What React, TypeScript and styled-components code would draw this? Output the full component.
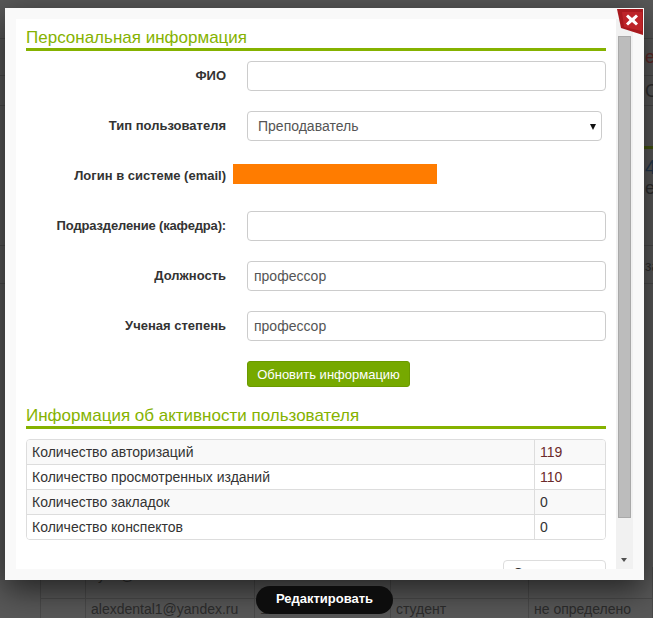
import React from 'react';
import styled, { createGlobalStyle } from 'styled-components';

const GlobalStyle = createGlobalStyle`
    html, body {
        margin: 0;
        padding: 0;
        background: #565656;
    }
    body {
        font-family: "Liberation Sans", Arial, sans-serif;
        font-size: 14px;
        color: #333;
    }
`;

const Page = styled.div`
    position: relative;
    width: 653px;
    height: 618px;
    overflow: hidden;
    background: #585858;
`;

const BackRow = styled.div<{ $h: number; $plain?: boolean }>`
    box-sizing: border-box;
    height: ${(p) => p.$h}px;
    border-bottom: ${(p) => (p.$plain ? '0' : '1px solid #4a4a4a')};
    padding-left: 645px;
    line-height: ${(p) => p.$h}px;
    font-size: 18px;
    color: #2f2f2f;
    white-space: nowrap;
`;

const BackRed = styled.span`
    color: #5e2a28;
`;

const BackGreen = styled.div`
    height: 3px;
    margin-left: 644px;
    background: #44550f;
`;

const BackBlue = styled.span`
    color: #24384e;
    font-size: 20px;
`;

const BackSmall = styled.span`
    font-size: 14px;
`;

const BackTable = styled.div`
    position: absolute;
    left: 40px;
    right: 0;
    top: 567px;
    display: grid;
    grid-template-columns: 45px 169px 136px 138px 1fr;
    grid-auto-rows: 32px;
    border-left: 1px solid #4a4a4a;
`;

const BackCell = styled.div<{ $lift?: boolean }>`
    box-sizing: border-box;
    border-right: 1px solid #4a4a4a;
    border-bottom: 1px solid #4a4a4a;
    padding: 0 6px 0 5px;
    font-size: 14px;
    line-height: ${(p) => (p.$lift ? 16 : 20)}px;
    color: #2c2c2c;
    white-space: nowrap;
`;

const Modal = styled.div`
    position: absolute;
    left: 5px;
    top: 8px;
    width: 639px;
    height: 572px;
    box-sizing: border-box;
    padding: 11px;
    background: #f9f9f9;
    box-shadow: 0 10px 30px rgba(0, 0, 0, 0.6);
    display: flex;
`;

const Content = styled.div`
    flex: none;
    width: 600px;
    height: 550px;
    overflow: hidden;
    box-sizing: border-box;
    padding: 0 10px;
    background: #fff;
`;

const ScrollTrack = styled.div`
    position: relative;
    flex: none;
    width: 17px;
    height: 550px;
    box-sizing: border-box;
    padding: 17px 2px 0;
    background: #f1f1f1;
`;

const ScrollThumb = styled.div`
    height: 482px;
    box-sizing: border-box;
    background: #bcbcbc;
    border: 1px solid #a9a9a9;
`;

const ScrollArrow = styled.div`
    position: absolute;
    left: 5px;
    bottom: 7px;
    width: 0;
    height: 0;
    border-left: 3.5px solid transparent;
    border-right: 3.5px solid transparent;
    border-top: 4px solid #505050;
`;

const SectionTitle = styled.h3<{ $top: number }>`
    margin: ${(p) => p.$top}px 0 0;
    font-size: 17px;
    line-height: 19px;
    font-weight: 400;
    color: #85b200;
    border-bottom: 3px solid #85b200;
    padding-bottom: 1px;
`;

const FormRow = styled.div<{ $top: number }>`
    display: flex;
    align-items: center;
    margin-top: ${(p) => p.$top}px;
    height: 30px;
`;

const FieldLabel = styled.label<{ $tight?: boolean }>`
    flex: none;
    width: 200px;
    padding-bottom: 2px;
    text-align: right;
    font-size: 13px;
    font-weight: 700;
    letter-spacing: ${(p) => (p.$tight ? '-0.16px' : '0')};
    color: #333;
    white-space: nowrap;
`;

const TextField = styled.div`
    flex: none;
    margin-left: 21px;
    width: 359px;
    height: 30px;
    box-sizing: border-box;
    border: 1px solid #ccc;
    border-radius: 4px;
    background: #fff;
    padding: 0 6px;
    line-height: 28px;
    font-size: 14px;
    color: #555;
`;

const SelectField = styled(TextField)`
    position: relative;
    width: 355px;
    padding-left: 10px;
`;

const SelectCaret = styled.span`
    position: absolute;
    right: 5px;
    top: 12px;
    width: 0;
    height: 0;
    border-left: 3.5px solid transparent;
    border-right: 3.5px solid transparent;
    border-top: 6px solid #111;
`;

const Redacted = styled.div`
    flex: none;
    margin-left: 7px;
    margin-top: -5px;
    width: 204px;
    height: 20px;
    background: #ff7c00;
`;

const SubmitRow = styled.div`
    margin: 20px 0 0 221px;
`;

const SubmitButton = styled.button`
    display: block;
    width: 163px;
    height: 26px;
    padding: 0;
    border: 1px solid #6b9a00;
    border-radius: 3px;
    background: #76a900;
    color: #fff;
    font-family: inherit;
    font-size: 13px;
    text-align: center;
`;

const StatsTable = styled.div`
    margin-top: 10px;
    border: 1px solid #ddd;
    border-radius: 4px;
    overflow: hidden;
`;

const StatsRow = styled.div<{ $odd: boolean }>`
    display: grid;
    grid-template-columns: 507px 1fr;
    height: 25px;
    box-sizing: border-box;
    line-height: 24px;
    background: ${(p) => (p.$odd ? '#f9f9f9' : '#fff')};
    border-top: 1px solid #ddd;
    &:first-child {
        border-top: 0;
        height: 24px;
    }
`;

const StatsName = styled.div`
    padding-left: 5px;
    color: #333;
`;

const StatsValue = styled.div<{ $hot: boolean }>`
    padding-left: 5px;
    border-left: 1px solid #ddd;
    color: ${(p) => (p.$hot ? '#6b2a2a' : '#333')};
`;

const CutOff = styled.div`
    margin: 20px 0 0 477px;
    height: 30px;
    box-sizing: border-box;
    border: 1px solid #ddd;
    border-radius: 4px;
    padding: 4px 0 0 9px;
    color: #333;
`;

const CloseTag = styled.button`
    position: absolute;
    left: 612px;
    top: 1px;
    width: 26px;
    height: 26px;
    padding: 0;
    border: 0;
    background: none;
    line-height: 0;
`;

const EditButton = styled.button`
    position: absolute;
    left: 256px;
    top: 586px;
    width: 137px;
    height: 28px;
    padding: 0 0 4px;
    border: 0;
    border-radius: 14px;
    background: #0d0d0d;
    color: #fff;
    font-family: inherit;
    font-size: 13px;
    font-weight: 700;
`;

const stats = [
    { name: 'Количество авторизаций', value: 119 },
    { name: 'Количество просмотренных изданий', value: 110 },
    { name: 'Количество закладок', value: 0 },
    { name: 'Количество конспектов', value: 0 },
];

const CloseIcon: React.FC = () => (
    <svg width="26" height="26" viewBox="0 0 26 26">
        <path d="M0 0H26V26L4 19Z" fill="#a8191e" />
        <path d="M5 3H25V22L7 18Z" fill="#bd2429" />
        <path d="M9 7.5L11 5.5L15 9L19 5.5L21 7.5L17.5 11L21 14.5L19 16.5L15 13L11 16.5L9 14.5L12.5 11Z" fill="#fff" />
    </svg>
);

const App: React.FC = () => {
    return (
        <Page>
            <GlobalStyle />
            <BackRow $h={39} />
            <BackRow $h={37}><BackRed>ей</BackRed></BackRow>
            <BackRow $h={30}>С</BackRow>
            <BackRow $h={40} $plain />
            <BackGreen />
            <BackRow $h={36} $plain><BackBlue>4</BackBlue></BackRow>
            <BackRow $h={6} $plain>е</BackRow>
            <BackRow $h={55} />
            <BackRow $h={38}><BackSmall>за</BackSmall></BackRow>
            <BackTable>
                <BackCell />
                <BackCell $lift>vyan@mail.ru</BackCell>
                <BackCell />
                <BackCell />
                <BackCell />
                <BackCell />
                <BackCell>alexdental1@yandex.ru</BackCell>
                <BackCell>17.02.2013</BackCell>
                <BackCell>студент</BackCell>
                <BackCell>не определено</BackCell>
            </BackTable>
            <Modal>
                <Content>
                    <SectionTitle $top={9}>Персональная информация</SectionTitle>
                    <FormRow $top={10}>
                        <FieldLabel>ФИО</FieldLabel>
                        <TextField />
                    </FormRow>
                    <FormRow $top={20}>
                        <FieldLabel>Тип пользователя</FieldLabel>
                        <SelectField>
                            Преподаватель
                            <SelectCaret />
                        </SelectField>
                    </FormRow>
                    <FormRow $top={20}>
                        <FieldLabel>Логин в системе (email)</FieldLabel>
                        <Redacted />
                    </FormRow>
                    <FormRow $top={20}>
                        <FieldLabel $tight>Подразделение (кафедра):</FieldLabel>
                        <TextField />
                    </FormRow>
                    <FormRow $top={20}>
                        <FieldLabel>Должность</FieldLabel>
                        <TextField>профессор</TextField>
                    </FormRow>
                    <FormRow $top={20}>
                        <FieldLabel>Ученая степень</FieldLabel>
                        <TextField>профессор</TextField>
                    </FormRow>
                    <SubmitRow>
                        <SubmitButton type="button">Обновить информацию</SubmitButton>
                    </SubmitRow>
                    <SectionTitle $top={19}>Информация об активности пользователя</SectionTitle>
                    <StatsTable>
                        {stats.map((s, i) => (
                            <StatsRow key={s.name} $odd={i % 2 === 0}>
                                <StatsName>{s.name}</StatsName>
                                <StatsValue $hot={s.value > 0}>{s.value}</StatsValue>
                            </StatsRow>
                        ))}
                    </StatsTable>
                    <CutOff>Сохранить</CutOff>
                </Content>
                <ScrollTrack>
                    <ScrollThumb />
                    <ScrollArrow />
                </ScrollTrack>
                <CloseTag type="button" aria-label="Закрыть">
                    <CloseIcon />
                </CloseTag>
            </Modal>
            <EditButton type="button">Редактировать</EditButton>
        </Page>
    );
};

export default App;
